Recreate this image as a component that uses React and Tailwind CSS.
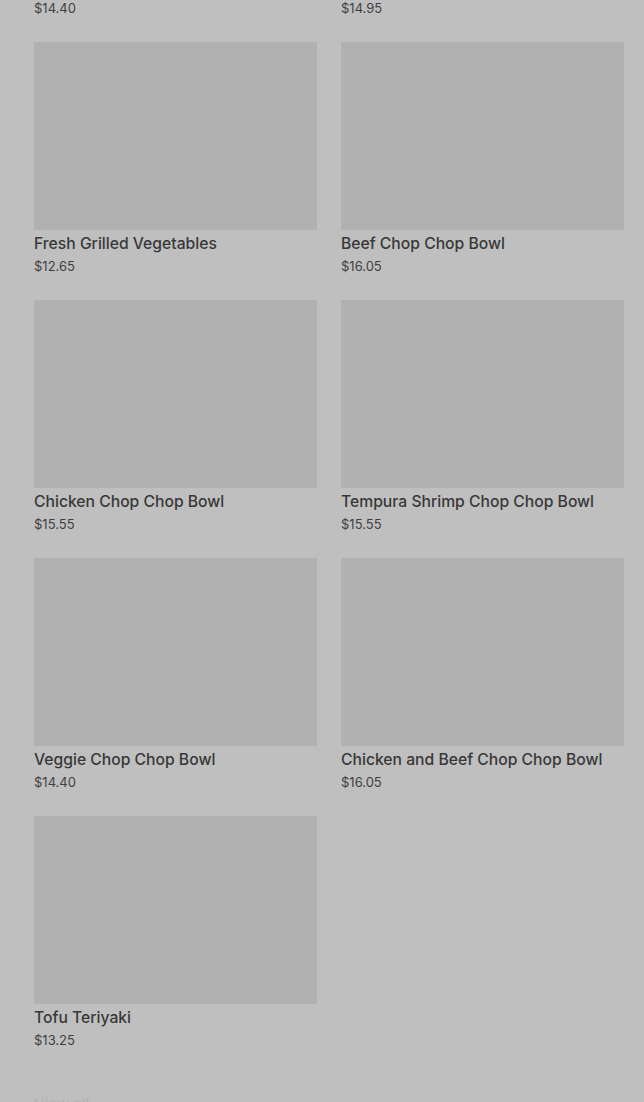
import React from 'react';

const items = [
  { name: 'Fresh Grilled Vegetables', price: '$12.65' },
  { name: 'Beef Chop Chop Bowl', price: '$16.05' },
  { name: 'Chicken Chop Chop Bowl', price: '$15.55' },
  { name: 'Tempura Shrimp Chop Chop Bowl', price: '$15.55' },
  { name: 'Veggie Chop Chop Bowl', price: '$14.40' },
  { name: 'Chicken and Beef Chop Chop Bowl', price: '$16.05' },
  { name: 'Tofu Teriyaki', price: '$13.25' },
];

const MenuCard = ({ item }) => (
  <div>
    <div className="h-[188px] bg-[#b1b1b1]" />
    <div className="mt-[3px] text-[15.7px] leading-[22px] font-medium text-[#383838]">{item.name}</div>
    <div className="mt-[2px] text-[13px] leading-[18px] text-[#3f3f3f]">{item.price}</div>
  </div>
);

export default function App() {
  return (
    <div
      className="h-[1102px] overflow-hidden bg-[#bfbfbf] pl-[34px] pr-[20px]"
      style={{ fontFamily: 'Inter, "Open Sans", sans-serif' }}
    >
      <div className="-mt-[1px] grid grid-cols-2 gap-x-6 text-[13px] leading-[18px] text-[#3f3f3f]">
        <div>$14.40</div>
        <div>$14.95</div>
      </div>
      <div className="mt-[25px] grid grid-cols-2 gap-x-6 gap-y-[25px]">
        {items.map((item) => (
          <MenuCard key={item.name} item={item} />
        ))}
      </div>
      <div className="mt-[44px] text-[15px] leading-[22px] font-medium text-[#b4b4b4]">View all</div>
    </div>
  );
}
